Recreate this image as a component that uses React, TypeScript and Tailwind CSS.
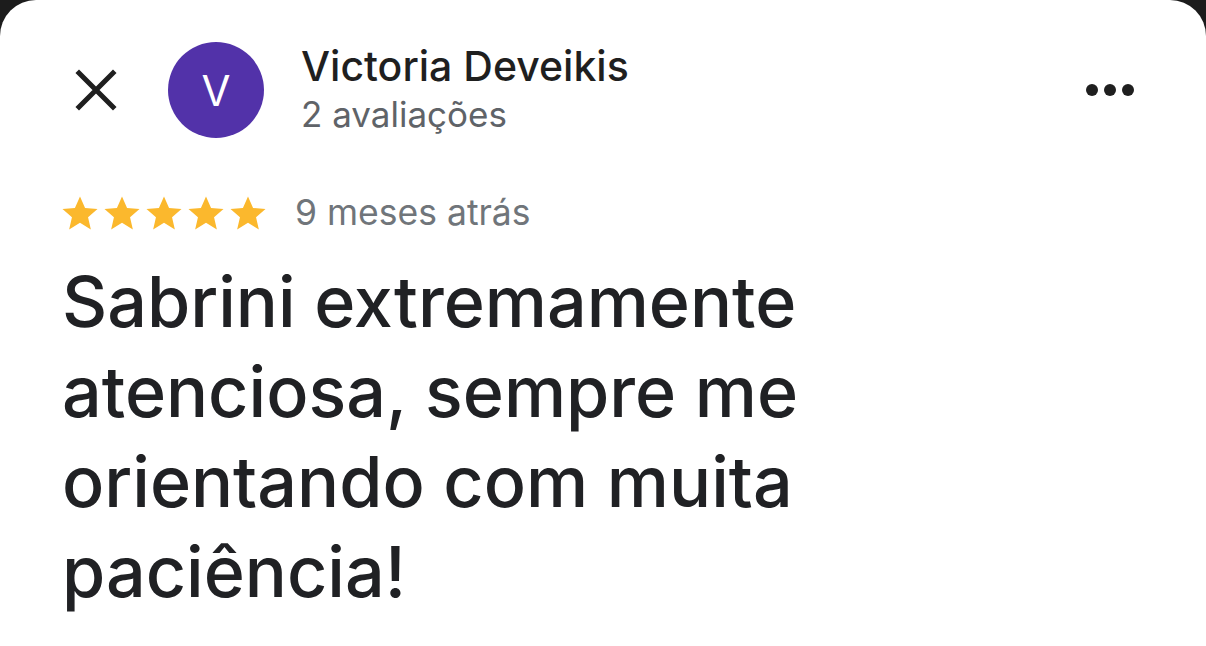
import React from 'react';

function Star() {
  return (
    <svg viewBox="0 0 24 24" className="h-[42px] w-[42px] shrink-0" fill="#fbb82d">
      <path d="M12 2.5l2.9 6.6 7.1.6-5.4 4.7 1.6 7-6.2-3.8-6.2 3.8 1.6-7L2 9.7l7.1-.6z" />
    </svg>
  );
}

export default function App() {
  return (
    <div className="min-h-screen bg-[#1c1c1c]">
      <div className="h-[646px] rounded-t-[36px] bg-white" style={{ fontFamily: 'Inter, sans-serif' }}>
        <div className="flex items-center pl-[75px] pr-[72px] pt-[42px]">
          <svg viewBox="0 0 42 42" className="h-[42px] w-[42px] shrink-0" stroke="#1f1f1f" strokeWidth="5" strokeLinecap="square">
            <path d="M4 4l34 34M38 4L4 38" />
          </svg>
          <div className="ml-[51px] flex h-[96px] w-[96px] shrink-0 items-center justify-center rounded-full bg-[#5232a9] text-[42px] text-white">
            V
          </div>
          <div className="ml-[37px] flex-1 leading-[46px]">
            <div className="text-[41px] font-medium text-[#1f1f1f]">Victoria Deveikis</div>
            <div className="mt-[2px] text-[35px] text-[#5f6368]">2 avaliações</div>
          </div>
          <div className="flex gap-[6px]">
            <span className="h-[12px] w-[12px] rounded-full bg-[#1f1f1f]" />
            <span className="h-[12px] w-[12px] rounded-full bg-[#1f1f1f]" />
            <span className="h-[12px] w-[12px] rounded-full bg-[#1f1f1f]" />
          </div>
        </div>
        <div className="mt-[48px] flex items-center pl-[59px]">
          <div className="flex">
            <Star />
            <Star />
            <Star />
            <Star />
            <Star />
          </div>
          <span className="ml-[26px] text-[35.5px] text-[#70757a]">9 meses atrás</span>
        </div>
        <p className="mt-[18px] w-[820px] pl-[62px] text-[70px] font-medium leading-[90px] text-[#202124]">
          Sabrini extremamente atenciosa, sempre me orientando com muita paciência!
        </p>
      </div>
    </div>
  );
}
